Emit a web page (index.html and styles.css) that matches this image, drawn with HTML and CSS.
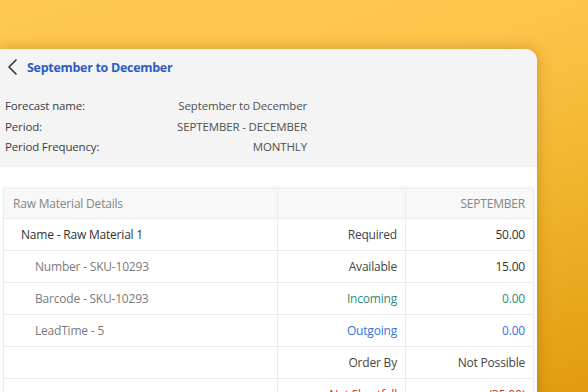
FILE: index.html
```html
<!DOCTYPE html>
<html>
<head>
<meta charset="utf-8">
<link rel="stylesheet" href="styles.css">
</head>
<body>
<div class="card">
  <div class="top">
    <div class="header">
      <svg class="back" width="12" height="18" viewBox="0 0 12 18"><path d="M9 2 L2 9 L9 16" fill="none" stroke="#333" stroke-width="1.6" stroke-linecap="round" stroke-linejoin="round"/></svg>
      <span class="title">September to December</span>
    </div>
    <div class="form">
      <div class="frow"><span class="lbl">Forecast name:</span><span class="val">September to December</span></div>
      <div class="frow"><span class="lbl">Period:</span><span class="val">SEPTEMBER - DECEMBER</span></div>
      <div class="frow"><span class="lbl">Period Frequency:</span><span class="val">MONTHLY</span></div>
    </div>
  </div>
  <div class="body">
    <table class="grid">
      <colgroup><col class="c1"><col class="c2"><col class="c3"></colgroup>
      <thead>
        <tr><th class="left">Raw Material Details</th><th></th><th class="right">SEPTEMBER</th></tr>
      </thead>
      <tbody>
        <tr><td class="name">Name - Raw Material 1</td><td class="right">Required</td><td class="right num">50.00</td></tr>
        <tr><td class="sub">Number - SKU-10293</td><td class="right">Available</td><td class="right num">15.00</td></tr>
        <tr><td class="sub">Barcode - SKU-10293</td><td class="right green">Incoming</td><td class="right green">0.00</td></tr>
        <tr><td class="sub">LeadTime - 5</td><td class="right blue">Outgoing</td><td class="right blue">0.00</td></tr>
        <tr><td></td><td class="right">Order By</td><td class="right">Not Possible</td></tr>
        <tr><td></td><td class="right red">Net Shortfall</td><td class="right red">(35.00)</td></tr>
      </tbody>
    </table>
  </div>
</div>
</body>
</html>
```

FILE: styles.css
```css
html, body {
  margin: 0;
  height: 392px;
  overflow: hidden;
}
body {
  background: linear-gradient(160deg, #fec94f 0%, #fdc44a 35%, #f1b42c 65%, #e19b10 100%);
  font-family: "Open Sans", "Noto Sans", sans-serif;
  font-size: 12px;
  padding-top: 49px;
  box-sizing: border-box;
}
.card {
  width: 537px;
  height: 400px;
  background: #ffffff;
  border-top-right-radius: 12px;
  box-shadow: 0 0 14px rgba(120, 70, 0, 0.35);
  overflow: hidden;
}
.top {
  background: #f4f4f4;
  height: 118px;
  padding-left: 5px;
  padding-right: 230px;
}
.header {
  display: flex;
  align-items: center;
  height: 36px;
  gap: 8px;
}
.back {
  margin-left: 2px;
}
.title {
  color: #2d5cbf;
  font-weight: 700;
  font-size: 12.5px;
  letter-spacing: -0.3px;
}
.form {
  padding-top: 11px;
  font-size: 11.5px;
  letter-spacing: -0.15px;
}
.frow {
  display: flex;
  justify-content: space-between;
  height: 20.5px;
  line-height: 20.5px;
  color: #3c3c3c;
}
.val {
  color: #505050;
}
.body {
  padding: 21px 4px 0 3px;
}
.grid {
  width: 530px;
  border-collapse: collapse;
  table-layout: fixed;
  letter-spacing: -0.2px;
  box-shadow: 0 -2px 3px rgba(0, 0, 0, 0.04);
}
.c1 { width: 274px; }
.c2 { width: 128px; }
.c3 { width: 128px; }
.grid th, .grid td {
  border: 1px solid #ececec;
  padding: 0 8px;
  height: 31px;
  white-space: nowrap;
  color: #444;
}
.grid th {
  background: #f8f8f8;
  font-weight: 400;
  color: #858585;
  height: 29px;
}
.grid th.left {
  text-align: left;
  padding-left: 9px;
}
.right {
  text-align: right;
}
.grid td.name {
  padding-left: 17px;
  color: #333;
}
.grid td.sub {
  padding-left: 31px;
  color: #7a7a7a;
}
.grid td.num {
  color: #333;
}
.grid td.green { color: #2e8c76; }
.grid td.blue { color: #3a72d4; }
.grid td.red { color: #c0392b; }
```
